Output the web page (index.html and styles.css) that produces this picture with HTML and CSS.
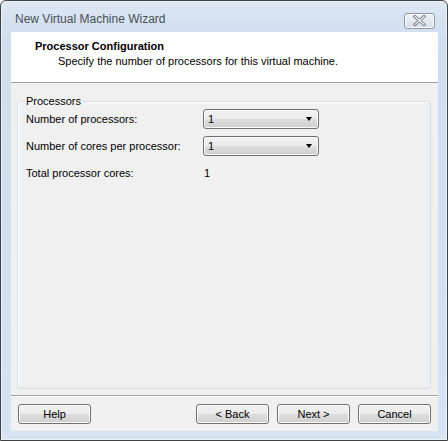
FILE: index.html
```html
<!DOCTYPE html>
<html>
<head>
<meta charset="utf-8">
<link rel="stylesheet" href="styles.css">
</head>
<body>
<div class="window">
  <div class="titlebar">
    <span class="title">New Virtual Machine Wizard</span>
    <button class="close" aria-label="Close">
      <svg width="13" height="11" viewBox="0 0 13 11">
        <path d="M2 1.5 L11 9.5 M11 1.5 L2 9.5" stroke="#6f7680" stroke-width="3" stroke-linecap="square"/>
        <path d="M2 1.5 L11 9.5 M11 1.5 L2 9.5" stroke="#ffffff" stroke-width="1.2" stroke-linecap="square"/>
      </svg>
    </button>
  </div>
  <div class="client">
    <div class="header">
      <div class="h-title">Processor Configuration</div>
      <div class="h-sub">Specify the number of processors for this virtual machine.</div>
    </div>
    <div class="body">
      <fieldset class="group">
        <legend>Processors</legend>
        <div class="row first">
          <span class="label">Number of processors:</span>
          <div class="combo"><span>1</span><i class="arrow"></i></div>
        </div>
        <div class="row">
          <span class="label">Number of cores per processor:</span>
          <div class="combo"><span>1</span><i class="arrow"></i></div>
        </div>
        <div class="row plain">
          <span class="label">Total processor cores:</span>
          <span class="value">1</span>
        </div>
      </fieldset>
    </div>
    <div class="footer">
      <button class="btn">Help</button>
      <div class="spacer"></div>
      <button class="btn">&lt; Back</button>
      <button class="btn">Next &gt;</button>
      <button class="btn">Cancel</button>
    </div>
  </div>
</div>
</body>
</html>
```
FILE: styles.css
```css
* { box-sizing: border-box; }
html, body { margin: 0; padding: 0; background: #ffffff; }
body { font-family: "Liberation Sans", Arial, sans-serif; font-size: 11px; color: #000; }

.window {
  width: 448px;
  height: 441px;
  border: 1px solid #3f4245;
  border-radius: 6px 6px 0 0;
  background: linear-gradient(#dde7f3, #cfddee 40px, #d6e3f2);
  box-shadow: inset 0 0 0 1px #eef3fa;
  padding: 0 9px 9px 10px;
  display: flex;
  flex-direction: column;
}

.titlebar {
  height: 31px;
  display: flex;
  align-items: center;
  justify-content: space-between;
  padding: 0 3px 0 4px;
}
.title {
  font-family: "Liberation Sans", Arial, sans-serif;
  font-size: 12px;
  color: #4a5058;
  margin-top: 5px;
}
.close {
  width: 31px;
  height: 16px;
  margin-top: 8px;
  border: 1px solid #8f98a4;
  border-radius: 3px;
  background: linear-gradient(#edf2f8, #d6e0ec);
  box-shadow: inset 0 0 0 1px #f7fafd;
  padding: 0;
  display: flex;
  align-items: center;
  justify-content: center;
}

.client {
  flex: 1;
  background: #f0f0f0;
  display: flex;
  flex-direction: column;
}

.header {
  height: 51px;
  background: #ffffff;
  border-bottom: 1px solid #a0a0a0;
  padding: 7px 0 0 24px;
}
.h-title { font-weight: bold; line-height: 14px; }
.h-sub { padding-left: 23px; line-height: 15px; margin-top: 1px; }

.body {
  flex: 1;
  padding: 12px 7px 6px 6px;
  display: flex;
  border-bottom: 1px solid #a0a0a0;
  box-shadow: 0 1px 0 #ffffff;
}
.group {
  flex: 1;
  margin: 0;
  border: 1px solid #d5dfe5;
  border-radius: 3px;
  box-shadow: inset 1px 1px 0 #ffffff;
  padding: 0 0 0 8px;
}
.group legend {
  padding: 0 1px;
  margin-left: -1px;
  line-height: 12px;
}
.row {
  display: flex;
  align-items: center;
  height: 27px;
}
.row.first { margin-top: -2px; }
.label { width: 177px; }
.combo {
  width: 116px;
  height: 20px;
  border: 1px solid #707070;
  border-radius: 3px;
  background: linear-gradient(#f2f2f2 0%, #ebebeb 50%, #dddddd 51%, #cfcfcf 100%);
  box-shadow: inset 0 0 0 1px #fbfbfb;
  display: flex;
  align-items: center;
  justify-content: space-between;
  padding: 0 6px 0 4px;
}
.combo span { color: #000; }
.arrow {
  width: 0; height: 0;
  border-left: 3.5px solid transparent;
  border-right: 3.5px solid transparent;
  border-top: 4px solid #000;
}
.row.plain { height: 27px; }
.value { padding-left: 1px; }

.footer {
  height: 35px;
  display: flex;
  align-items: flex-start;
  padding: 8px 7px 0 7px;
  gap: 8px;
}
.spacer { flex: 1; }
.btn {
  width: 73px;
  height: 20px;
  font-family: inherit;
  font-size: 11px;
  color: #000;
  border: 1px solid #707070;
  border-radius: 3px;
  background: linear-gradient(#f2f2f2 0%, #ebebeb 50%, #dddddd 51%, #cfcfcf 100%);
  box-shadow: inset 0 0 0 1px #fcfcfc;
  padding: 0;
}
```
